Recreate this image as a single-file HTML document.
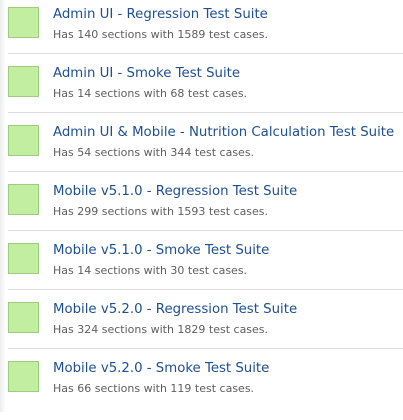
<!DOCTYPE html>
<html><head><style>
html,body{margin:0;padding:0;width:403px;height:412px;background:#fff;overflow:hidden;font-family:"DejaVu Sans","Liberation Sans",sans-serif}
body{background:linear-gradient(to right,#ececec 0,#f7f7f7 3px,#fff 6px)}
.row{position:absolute;left:8px;width:395px;height:59px}
.box{position:absolute;left:0;top:0;width:31px;height:31px;background:#c2eea0;border:1px solid #9fca83;box-sizing:border-box}
.t{position:absolute;left:45px;top:0px;font-size:13.3px;color:#1e4f91;white-space:nowrap}
.s{position:absolute;left:45px;top:21px;font-size:11px;color:#5e5e5e;white-space:nowrap}
.sep{position:absolute;left:0;top:46px;width:395px;height:1px;background:#ddd}
</style></head><body>
<div class="row" style="top:7px"><div class="box"></div><div class="t">Admin UI - Regression Test Suite</div><div class="s">Has 140 sections with 1589 test cases.</div><div class="sep"></div></div>
<div class="row" style="top:66px"><div class="box"></div><div class="t">Admin UI - Smoke Test Suite</div><div class="s">Has 14 sections with 68 test cases.</div><div class="sep"></div></div>
<div class="row" style="top:125px"><div class="box"></div><div class="t">Admin UI &amp; Mobile - Nutrition Calculation Test Suite</div><div class="s">Has 54 sections with 344 test cases.</div><div class="sep"></div></div>
<div class="row" style="top:184px"><div class="box"></div><div class="t">Mobile v5.1.0 - Regression Test Suite</div><div class="s">Has 299 sections with 1593 test cases.</div><div class="sep"></div></div>
<div class="row" style="top:243px"><div class="box"></div><div class="t">Mobile v5.1.0 - Smoke Test Suite</div><div class="s">Has 14 sections with 30 test cases.</div><div class="sep"></div></div>
<div class="row" style="top:302px"><div class="box"></div><div class="t">Mobile v5.2.0 - Regression Test Suite</div><div class="s">Has 324 sections with 1829 test cases.</div><div class="sep"></div></div>
<div class="row" style="top:361px"><div class="box"></div><div class="t">Mobile v5.2.0 - Smoke Test Suite</div><div class="s">Has 66 sections with 119 test cases.</div></div>
</body></html>
